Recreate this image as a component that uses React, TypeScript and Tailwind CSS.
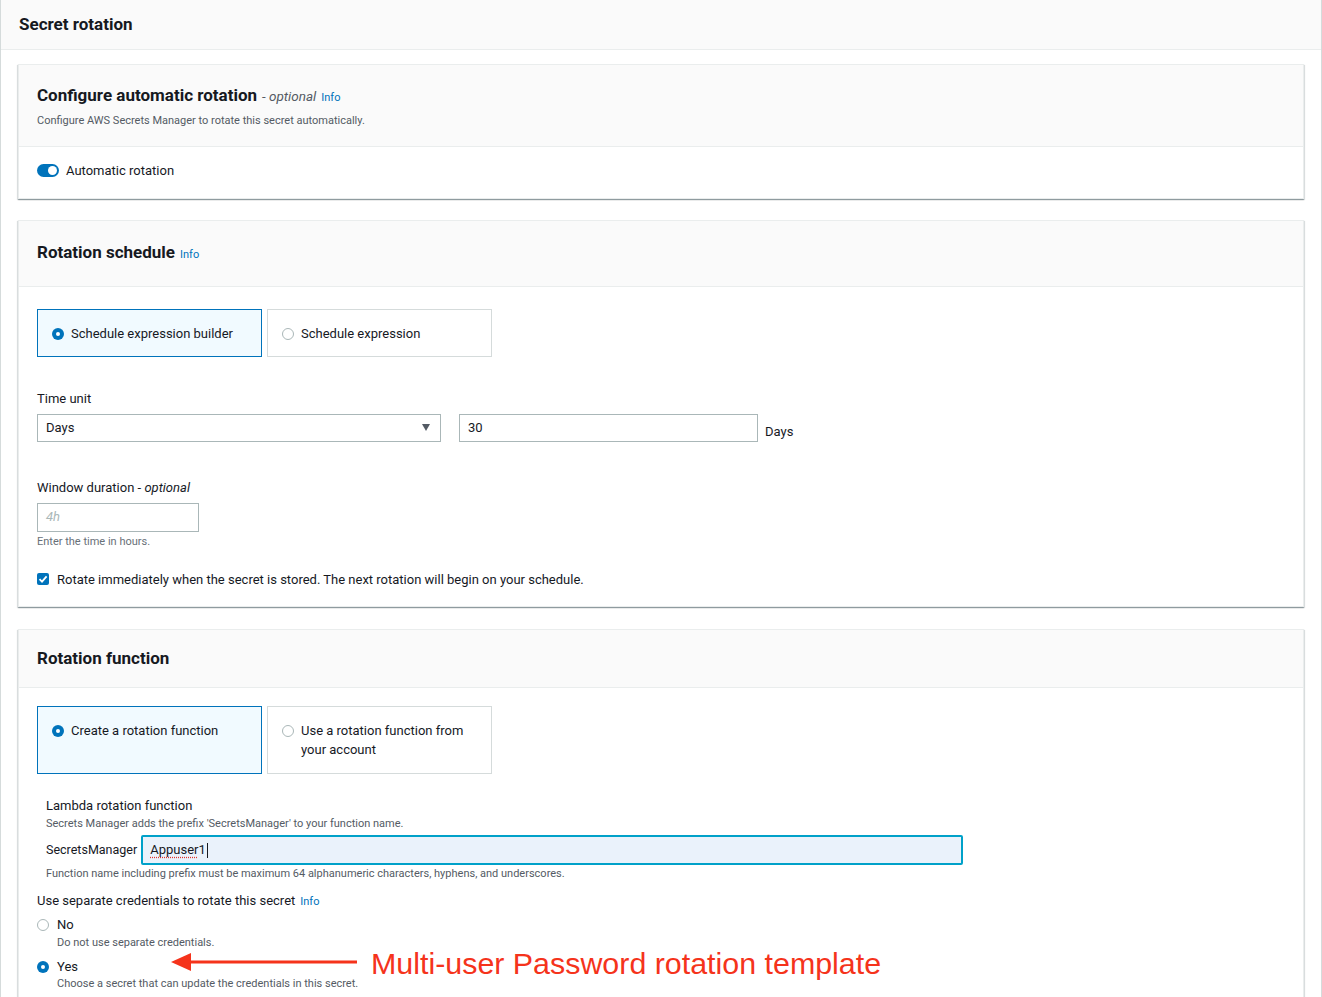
import React from 'react';

const Info = () => (
  <span className="ml-[5px] text-[11px] font-normal text-[#0073bb]">Info</span>
);

const Radio = ({ checked }: { checked?: boolean }) =>
  checked ? (
    <span className="flex h-[12px] w-[12px] shrink-0 items-center justify-center rounded-full bg-[#0073bb]">
      <span className="block h-[4px] w-[4px] rounded-full bg-white" />
    </span>
  ) : (
    <span className="block h-[12px] w-[12px] shrink-0 rounded-full border border-[#aab7b8] bg-white" />
  );

const Tile = ({ label, checked, h }: { label: React.ReactNode; checked?: boolean; h: string }) => (
  <div
    className={
      (checked ? 'border-[#0073bb] bg-[#f1faff] ' : 'border-[#d5dbdb] bg-white ') +
      h +
      ' flex w-[225px] items-start gap-[7px] border px-[14px] pt-[14px]'
    }
  >
    <span className="flex pt-[4px]">
      <Radio checked={checked} />
    </span>
    <span className="text-[13px] leading-[19px] text-[#16191f]">{label}</span>
  </div>
);

const Card = ({ header, children }: { header: React.ReactNode; children: React.ReactNode }) => (
  <section className="border border-[#eaeded] bg-white shadow-[0_1px_1px_0_rgba(0,28,36,0.3),1px_1px_1px_0_rgba(0,28,36,0.1),-1px_1px_1px_0_rgba(0,28,36,0.1)]">
    <div className="border-b border-[#eaeded] bg-[#fafafa] px-[18px]">{header}</div>
    <div className="px-[18px]">{children}</div>
  </section>
);

export default function App() {
  return (
    <div className="relative min-h-[997px] w-[1322px] overflow-hidden border-x border-[#d5dbdb] bg-white font-['Roboto',sans-serif] text-[#16191f]">
      <div className="flex h-[50px] items-center border-b border-[#eaeded] bg-[#fafafa] px-[18px]">
        <h2 className="text-[17px] font-bold">Secret rotation</h2>
      </div>

      <div className="flex flex-col gap-[21px] px-[17px] pt-[14px]">
        <Card
          header={
            <div className="pb-[17px] pt-[19px]">
              <div className="flex items-baseline">
                <h3 className="text-[17px] font-bold leading-[22px]">Configure automatic rotation</h3>
                <span className="ml-[5px] text-[13.5px] italic text-[#545b64]">- optional</span>
                <Info />
              </div>
              <p className="mt-[6px] text-[11px] leading-[16px] text-[#545b64]">
                Configure AWS Secrets Manager to rotate this secret automatically.
              </p>
            </div>
          }
        >
          <div className="flex h-[51px] items-start gap-[7px] pt-[14px]">
            <span className="mt-[3px] flex h-[13px] w-[22px] items-center justify-end rounded-full bg-[#0073bb] pr-[2px]">
              <span className="block h-[9px] w-[9px] rounded-full bg-white" />
            </span>
            <span className="text-[13px] leading-[19px]">Automatic rotation</span>
          </div>
        </Card>

        <Card
          header={
            <div className="flex h-[65px] items-center">
              <h3 className="flex items-baseline text-[17px] font-bold">
                Rotation schedule
                <Info />
              </h3>
            </div>
          }
        >
          <div className="pb-[17px] pt-[22px]">
            <div className="flex gap-[5px]">
              <Tile checked h="h-[48px]" label="Schedule expression builder" />
              <Tile h="h-[48px]" label="Schedule expression" />
            </div>

            <div className="mt-[32px] text-[13px] leading-[20px]">Time unit</div>
            <div className="mt-[5px] flex items-start">
              <div className="flex h-[28px] w-[404px] items-center justify-between border border-[#aab7b8] px-[8px] text-[13px]">
                <span>Days</span>
                <span className="mr-[2px] block h-0 w-0 border-x-[4px] border-t-[7px] border-x-transparent border-t-[#545b64]" />
              </div>
              <div className="ml-[18px] flex h-[28px] w-[299px] items-center border border-[#aab7b8] px-[8px] text-[13px]">
                30
              </div>
              <span className="ml-[7px] mt-[8px] text-[13px]">Days</span>
            </div>

            <div className="mt-[36px] text-[13px] leading-[20px]">
              Window duration - <span className="italic">optional</span>
            </div>
            <div className="mt-[5px] flex h-[29px] w-[162px] items-center border border-[#aab7b8] px-[8px] text-[13px] italic text-[#aab7b8]">
              4h
            </div>
            <p className="mt-[2px] text-[11px] leading-[16px] text-[#687078]">Enter the time in hours.</p>

            <div className="mt-[20px] flex items-center gap-[8px]">
              <span className="flex h-[12px] w-[12px] items-center justify-center rounded-[2px] bg-[#0073bb]">
                <svg viewBox="0 0 12 12" className="h-[12px] w-[12px]">
                  <path d="M2.5 6.2 L5 8.6 L9.6 3.4" fill="none" stroke="white" strokeWidth="1.8" />
                </svg>
              </span>
              <span className="text-[13px]">
                Rotate immediately when the secret is stored. The next rotation will begin on your schedule.
              </span>
            </div>
          </div>
        </Card>

        <div className="mt-[1px]">
          <Card
            header={
              <div className="flex h-[57px] items-center">
                <h3 className="text-[17px] font-bold">Rotation function</h3>
              </div>
            }
          >
            <div className="pb-[30px] pt-[18px]">
              <div className="flex gap-[5px]">
                <Tile checked h="h-[68px]" label="Create a rotation function" />
                <Tile h="h-[68px]" label={<>Use a rotation function from<br />your account</>} />
              </div>

              <div className="mt-[22px] pl-[9px]">
                <div className="text-[13px] leading-[20px]">Lambda rotation function</div>
                <p className="text-[11px] leading-[16px] text-[#545b64]">
                  Secrets Manager adds the prefix &apos;SecretsManager&apos; to your function name.
                </p>
                <div className="mt-[3px] flex items-center gap-[4px]">
                  <span className="text-[12.5px]">SecretsManager</span>
                  <div className="flex h-[30px] w-[822px] items-center rounded-[2px] border-2 border-[#00a1c9] bg-[#eaf2fb] px-[7px] text-[13px]">
                    <span className="underline decoration-[#e0342c] decoration-dotted underline-offset-[3px]">Appuser</span>
                    <span>1</span>
                    <span className="ml-[1px] block h-[15px] w-[1px] bg-[#16191f]" />
                  </div>
                </div>
                <p className="mt-[1px] text-[11px] leading-[16px] text-[#545b64]">
                  Function name including prefix must be maximum 64 alphanumeric characters, hyphens, and underscores.
                </p>
              </div>

              <div className="mt-[9px] flex items-baseline text-[13px] leading-[20px]">
                Use separate credentials to rotate this secret
                <Info />
              </div>

              <div className="mt-[3px] flex items-center gap-[8px]">
                <Radio />
                <span className="text-[13px] leading-[20px]">No</span>
              </div>
              <p className="pl-[20px] text-[11px] leading-[16px] text-[#545b64]">Do not use separate credentials.</p>
              <div className="mt-[6px] flex items-center gap-[8px]">
                <Radio checked />
                <span className="text-[13px] leading-[20px]">Yes</span>
              </div>
              <p className="mt-[-1px] pl-[20px] text-[11px] leading-[16px] text-[#545b64]">
                Choose a secret that can update the credentials in this secret.
              </p>
            </div>
          </Card>
        </div>
      </div>

      {/* annotation */}
      <div className="absolute left-[168px] top-[943px] flex items-center">
        <svg width="190" height="40" viewBox="0 0 190 40">
          <path d="M2 19 L22 10 L22 28 Z" fill="#f5331b" />
          <rect x="18" y="17.5" width="170" height="3" fill="#f5331b" />
        </svg>
        <span className="ml-[12px] font-['Liberation_Sans',Arial,sans-serif] text-[30.4px] leading-[40px] text-[#f5331b]">
          Multi-user Password rotation template
        </span>
      </div>
    </div>
  );
}
